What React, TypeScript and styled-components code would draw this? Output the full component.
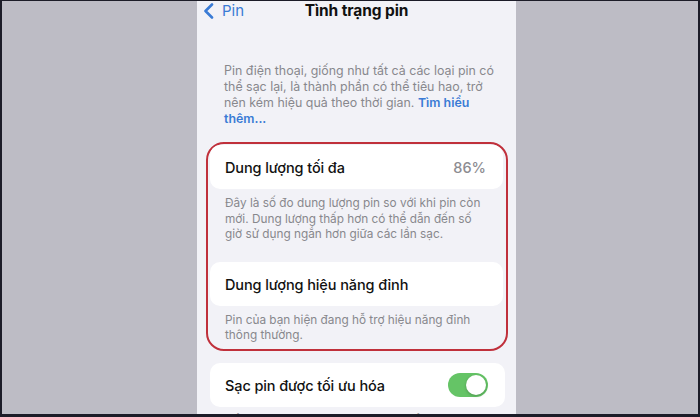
import React from "react";
import styled, { createGlobalStyle } from "styled-components";

const GlobalStyle = createGlobalStyle`
  html, body {
    margin: 0;
    padding: 0;
    background: #1c1c28;
  }
  * {
    box-sizing: border-box;
  }
`;

const Frame = styled.div`
  width: 700px;
  height: 417px;
  border-style: solid;
  border-color: #1c1c28;
  border-width: 1px 2px 3px 2px;
  background: #bdbcc5;
  display: grid;
  grid-template-columns: 195px 319px 1fr;
  overflow: hidden;
  font-family: Inter, "Noto Sans", "Liberation Sans", sans-serif;
`;

const Phone = styled.div`
  grid-column: 2;
  background: #f2f2f7;
  display: flex;
  flex-direction: column;
  overflow: hidden;
`;

const NavBar = styled.div`
  height: 24px;
  display: grid;
  grid-template-columns: 1fr auto 1fr;
  align-items: center;
  padding: 0 6px;
`;

const BackButton = styled.div`
  display: flex;
  align-items: center;
  gap: 8px;
  color: #3a7bd5;
  font-size: 15px;
`;

const Title = styled.div`
  font-size: 15.5px;
  font-weight: 700;
  color: #111;
  letter-spacing: -0.1px;
`;

const Intro = styled.p`
  margin: 43px 0 0 0;
  padding: 0 10px 0 27px;
  font-size: 12.4px;
  line-height: 16px;
  color: #88888d;
  white-space: nowrap;
`;

const Link = styled.span`
  color: #3a7bd5;
  font-weight: 600;
`;

const Highlight = styled.div`
  margin: 15px 8px 0 9px;
  padding: 1px 3px 5px 2px;
  border: 2px solid #c0303b;
  border-radius: 18px;
`;

const Row = styled.div<{ $mt?: number }>`
  height: 44px;
  margin-top: ${(p) => p.$mt ?? 0}px;
  background: #ffffff;
  border-radius: 10px;
  display: flex;
  align-items: center;
  justify-content: space-between;
  padding: 1px 17px 0 15px;
`;

const RowTitle = styled.span`
  font-size: 14.5px;
  font-weight: 500;
  color: #111;
  letter-spacing: -0.1px;
`;

const RowValue = styled.span`
  font-size: 14.5px;
  font-weight: 500;
  color: #8c8c91;
`;

const Note = styled.p`
  margin: 0;
  padding: 7px 12px 0 15px;
  font-size: 11.8px;
  line-height: 15.5px;
  color: #88888d;
`;

const Section = styled.div`
  margin: 12px 11px 0 13px;
`;

const Toggle = styled.div<{ $on: boolean }>`
  width: 40px;
  height: 24px;
  border-radius: 12px;
  background: ${(p) => (p.$on ? "#65c466" : "#e5e5ea")};
  display: flex;
  align-items: center;
  justify-content: ${(p) => (p.$on ? "flex-end" : "flex-start")};
  padding: 2px;
`;

const Knob = styled.div`
  width: 20px;
  height: 20px;
  border-radius: 50%;
  background: #fff;
  box-shadow: 0 1px 3px rgba(0, 0, 0, 0.25);
`;

const Chevron = () => (
  <svg width="11" height="16" viewBox="0 0 11 16">
    <path
      d="M9 1.5 L2.5 8 L9 14.5"
      fill="none"
      stroke="#3a7bd5"
      strokeWidth="2.6"
      strokeLinecap="round"
      strokeLinejoin="round"
    />
  </svg>
);

export default function App() {
  return (
    <>
      <GlobalStyle />
      <Frame>
        <Phone>
          <NavBar>
            <BackButton>
              <Chevron />
              Pin
            </BackButton>
            <Title>Tình trạng pin</Title>
            <span />
          </NavBar>
          <Intro>
            Pin điện thoại, giống như tất cả các loại pin có
            <br />
            thể sạc lại, là thành phần có thể tiêu hao, trở
            <br />
            nên kém hiệu quả theo thời gian. <Link>Tìm hiểu</Link>
            <br />
            <Link>thêm...</Link>
          </Intro>
          <Highlight>
            <Row>
              <RowTitle>Dung lượng tối đa</RowTitle>
              <RowValue>86%</RowValue>
            </Row>
            <Note>
              Đây là số đo dung lượng pin so với khi pin còn mới. Dung lượng
              thấp hơn có thể dẫn đến số giờ sử dụng ngắn hơn giữa các lần sạc.
            </Note>
            <Row $mt={19}>
              <RowTitle>Dung lượng hiệu năng đỉnh</RowTitle>
            </Row>
            <Note>
              Pin của bạn hiện đang hỗ trợ hiệu năng đỉnh thông thường.
            </Note>
          </Highlight>
          <Section>
            <Row>
              <RowTitle>Sạc pin được tối ưu hóa</RowTitle>
              <Toggle $on>
                <Knob />
              </Toggle>
            </Row>
            <Note>
              Để giảm lão hóa pin, iPhone tìm hiểu thói quen sạc hằng ngày của
              bạn.
            </Note>
          </Section>
        </Phone>
      </Frame>
    </>
  );
}
